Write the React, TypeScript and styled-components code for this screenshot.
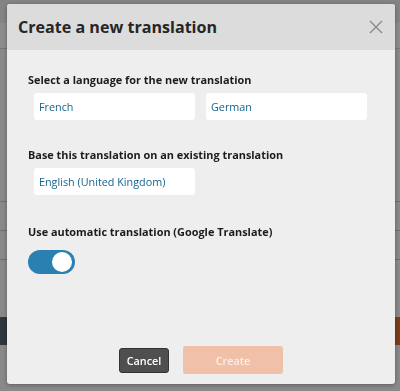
import { createGlobalStyle, styled } from 'styled-components';

const GlobalStyle = createGlobalStyle`
	html,
	body {
		margin: 0;
		padding: 0;
		height: 100%;
		overflow: hidden;
	}
	body {
		font-family: 'Open Sans', 'Noto Sans', Arial, sans-serif;
		background-color: #ffffff;
	}
`;

// the page that sits dimmed behind the dialog
const Page = styled.div`
	display: flex;
	flex-direction: column;
	height: 391px;
	background-color: #fafafa;
	div.topbar {
		height: 23px;
		background-color: #f0f0f0;
	}
	div.crumbs {
		height: 25px;
		background-color: #ffffff;
		border-bottom: 1px solid #d8d8d8;
	}
	div.spacer {
		height: 124px;
	}
	div.row {
		height: 28px;
		border-bottom: 1px solid #c8c8c8;
	}
	div.band {
		margin-top: 57px;
		display: flex;
		height: 28px;
		background-color: #546570;
		span {
			width: 6px;
			background-color: #e2702e;
			margin-left: auto;
		}
	}
`;

const Overlay = styled.div`
	position: fixed;
	inset: 0;
	display: flex;
	align-items: flex-start;
	padding: 4px 5px 7px 7px;
	background-color: rgba(0, 0, 0, 0.45);
`;

const Modal = styled.div`
	display: flex;
	flex-direction: column;
	width: 388px;
	height: 380px;
	background-color: #eeeeee;
	border-radius: 3px;
	box-shadow: 0 1px 4px rgba(0, 0, 0, 0.35);
	overflow: hidden;
`;

const Header = styled.div`
	display: flex;
	justify-content: space-between;
	align-items: center;
	height: 46px;
	padding: 0 12px 0 11px;
	background-color: #dcdcdc;
	h2 {
		margin: 0;
		font-size: 16.1px;
		font-weight: 700;
		color: #262626;
	}
`;

const CloseButton = styled.button`
	display: flex;
	padding: 0;
	border: none;
	background: none;
	cursor: pointer;
`;

const Body = styled.div`
	display: flex;
	flex-direction: column;
	flex: 1;
	padding: 21px 21px 10px;
`;

const Field = styled.div<{ $gap: number; $spacing: number }>`
	display: flex;
	flex-direction: column;
	gap: ${({ $gap }) => $gap}px;
	margin-bottom: ${({ $spacing }) => $spacing}px;
	label {
		font-size: 10.9px;
		line-height: 18px;
		font-weight: 700;
		color: #1c1c1c;
	}
`;

const Inputs = styled.div`
	display: flex;
	gap: 11px;
	padding-left: 6px;
`;

const Select = styled.div`
	display: flex;
	align-items: center;
	width: 161px;
	height: 27px;
	padding: 0 5px;
	box-sizing: border-box;
	border-radius: 3px;
	background-color: #ffffff;
	font-size: 10.8px;
	color: #16638f;
	white-space: nowrap;
`;

const Toggle = styled.div<{ $on: boolean }>`
	position: relative;
	width: 47px;
	height: 24px;
	border-radius: 12px;
	background-color: ${({ $on }) => ($on ? '#2b80b2' : '#c9c9c9')};
	&::after {
		content: '';
		position: absolute;
		top: 2px;
		left: ${({ $on }) => ($on ? '24px' : '2px')};
		width: 20px;
		height: 20px;
		border-radius: 50%;
		background-color: #ffffff;
	}
`;

const Footer = styled.div`
	display: flex;
	justify-content: center;
	align-items: center;
	gap: 14px;
	margin-top: auto;
`;

const Button = styled.button<{ $primary?: boolean }>`
	font-family: inherit;
	font-size: 10.8px;
	border-radius: 3px;
	cursor: pointer;
	padding: 0;
	${({ $primary }) =>
		$primary
			? `
		width: 100px;
		height: 28px;
		border: none;
		background-color: #f0c1a8;
		color: #fbeee6;
		font-weight: 600;
	`
			: `
		width: 50px;
		height: 25px;
		border: 1px solid #333;
		background-color: #4f4f4f;
		color: #ffffff;
		font-weight: 600;
	`}
`;

const App = () => {
	return (
		<>
			<GlobalStyle />
			<Page>
				<div className="topbar" />
				<div className="crumbs" />
				<div className="spacer" />
				<div className="row" />
				<div className="row" />
				<div className="row" />
				<div className="band">
					<span />
				</div>
			</Page>
			<Overlay>
				<Modal>
					<Header>
						<h2>Create a new translation</h2>
						<CloseButton aria-label="Close">
							<svg width="14" height="14" viewBox="0 0 14 14">
								<path d="M1 1 L13 13 M13 1 L1 13" stroke="#8a8a8a" strokeWidth="1.4" fill="none" />
							</svg>
						</CloseButton>
					</Header>
					<Body>
						<Field $gap={4} $spacing={26}>
							<label>Select a language for the new translation</label>
							<Inputs>
								<Select>French</Select>
								<Select>German</Select>
							</Inputs>
						</Field>
						<Field $gap={4} $spacing={28}>
							<label>Base this translation on an existing translation</label>
							<Inputs>
								<Select>English (United Kingdom)</Select>
							</Inputs>
						</Field>
						<Field $gap={9} $spacing={0}>
							<label>Use automatic translation (Google Translate)</label>
							<Toggle $on={true} />
						</Field>
						<Footer>
							<Button>Cancel</Button>
							<Button $primary>Create</Button>
						</Footer>
					</Body>
				</Modal>
			</Overlay>
		</>
	);
};

export default App;
